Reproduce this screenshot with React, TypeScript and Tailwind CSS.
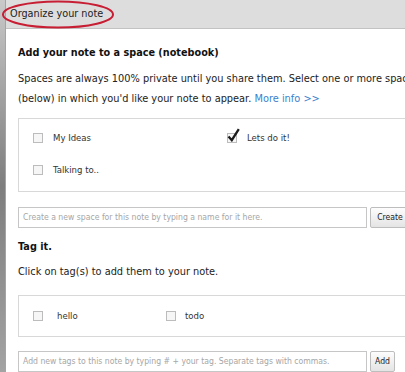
import React from 'react';

const verdana = { fontFamily: '"DejaVu Sans", Verdana, sans-serif' };
const tahoma = { fontFamily: '"DejaVu Sans Condensed", Tahoma, sans-serif' };

function Box({ checked }: { checked?: boolean }) {
  return (
    <span className="relative inline-block shrink-0 w-[10px] h-[10px] border border-[#bcbcbc] bg-[#f6f6f6]">
      {checked && (
        <svg className="absolute -top-[6px] -left-[1px]" width="13" height="14" viewBox="0 0 13 14">
          <path d="M1.5 8.5 L4.8 12.2 L11.8 1.2" stroke="#1a1a1a" strokeWidth="2.3" fill="none" />
        </svg>
      )}
    </span>
  );
}

function Option({ label, checked, gap = 'gap-[10px]' }: { label: string; checked?: boolean; gap?: string }) {
  return (
    <label className={`flex items-center ${gap} text-[9.5px] leading-[10px] text-[#333]`} style={tahoma}>
      <Box checked={checked} />
      <span>{label}</span>
    </label>
  );
}

function InputRow({ placeholder, button, btnW }: { placeholder: string; button: string; btnW: string }) {
  return (
    <div className="flex items-start gap-[3px]">
      <div
        className="w-[349px] h-[21px] border border-[#c6c6c6] bg-white pl-[4px] flex items-center text-[8.6px] text-[#a6a6a6] whitespace-nowrap overflow-hidden"
        style={tahoma}
      >
        {placeholder}
      </div>
      <button
        className={`${btnW} h-[21px] border border-[#bdbdbd] rounded-[2px] bg-gradient-to-b from-[#fdfdfd] to-[#e4e4e4] text-[8.6px] text-[#222] flex items-center justify-center`}
        style={tahoma}
      >
        {button}
      </button>
    </div>
  );
}

export default function App() {
  return (
    <div className="relative w-[405px] h-[372px] overflow-hidden flex bg-[#9a9a9a]">
      {/* page behind the dialog */}
      <div className="w-[5px] shrink-0 bg-gradient-to-b from-[#c9c9c9] via-[#7e7e7e] to-[#a3a3a3]" />

      <div className="w-[470px] shrink-0 bg-white border-l border-[#a4a4a4]" style={verdana}>
        <div className="h-[29px] bg-[#dddddd] border-b border-[#c2c2c2] flex items-center pl-[4px] text-[9.7px] text-[#222]">
          Organize your note
        </div>

        <div className="pl-[12px]">
          <h2 className="mt-[17px] text-[9.7px] font-bold text-[#111] leading-[14px]">
            Add your note to a space (notebook)
          </h2>
          <p className="mt-[9px] w-[405px] text-[9.8px] leading-[20px] text-[#222]">
            Spaces are always 100% private until you share them. Select one or more spaces (below) in which you'd like your note to appear.{' '}
            <span className="text-[#3b7fd0]">More info &gt;&gt;</span>
          </p>

          <div className="mt-[9px] w-[440px] h-[74px] border border-[#d8d8d8] grid grid-cols-[194px_1fr] content-start gap-y-[22px] pl-[14px] pt-[14px]">
            <Option label="My Ideas" />
            <Option label="Lets do it!" checked />
            <Option label="Talking to.." />
          </div>

          <div className="mt-[15px]">
            <InputRow
              placeholder="Create a new space for this note by typing a name for it here."
              button="Create"
              btnW="w-[40px]"
            />
          </div>

          <h2 className="mt-[12px] text-[9.7px] font-bold text-[#111] leading-[14px]">Tag it.</h2>
          <p className="mt-[11px] text-[9.8px] leading-[14px] text-[#222]">Click on tag(s) to add them to your note.</p>

          <div className="mt-[16px] w-[440px] h-[42px] border border-[#d8d8d8] flex items-center pl-[14px]">
            <div className="w-[133px]">
              <Option label="hello" gap="gap-[14px]" />
            </div>
            <Option label="todo" gap="gap-[9px]" />
          </div>

          <div className="mt-[14px]">
            <InputRow
              placeholder="Add new tags to this note by typing # + your tag. Separate tags with commas."
              button="Add"
              btnW="w-[25px]"
            />
          </div>
        </div>
      </div>

      {/* red highlight drawn over the title */}
      <svg className="absolute left-0 top-0" width="120" height="32" viewBox="0 0 120 32">
        <ellipse cx="58" cy="14.5" rx="55" ry="13" fill="none" stroke="#c81e34" strokeWidth="2" />
      </svg>
    </div>
  );
}
